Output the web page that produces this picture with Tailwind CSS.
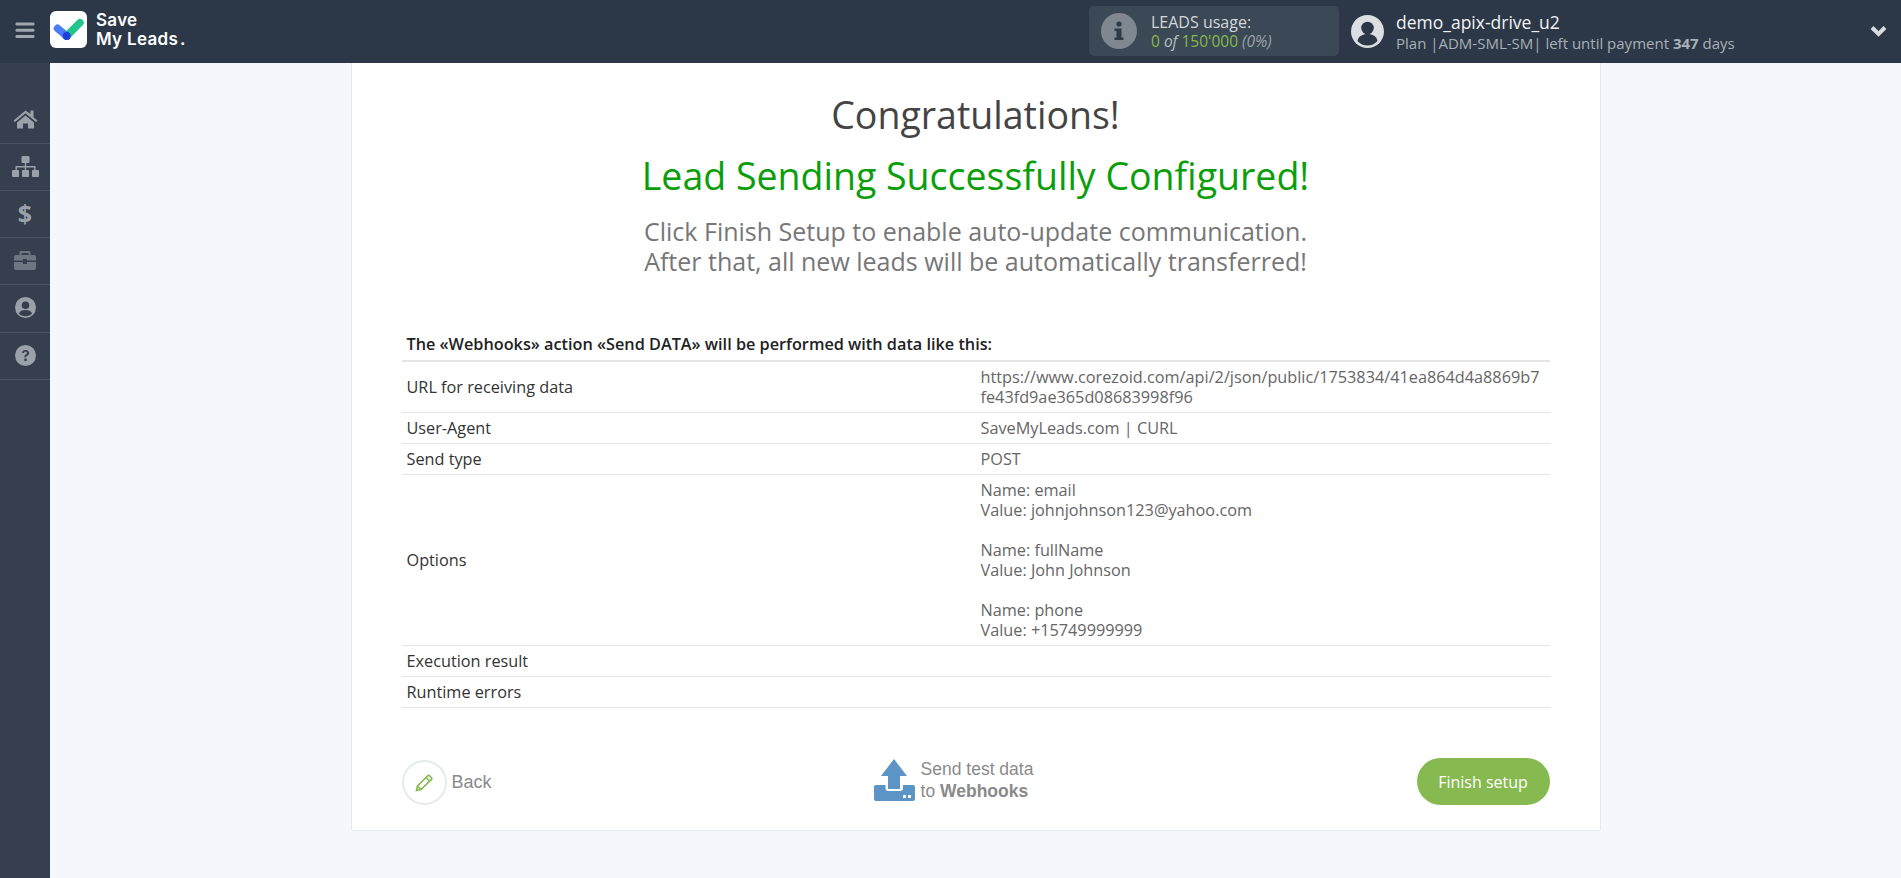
<!DOCTYPE html>
<html><head><meta charset="utf-8"><script src="https://cdn.jsdelivr.net/npm/@tailwindcss/browser@4"></script></head>
<body class="h-[878px] w-[1901px] overflow-hidden bg-[#f4f7fc] font-['Open_Sans',sans-serif]">
<header class="flex h-[63px] items-center bg-[#2c3847]">
  <div class="mb-[3px] flex w-[50px] justify-center">
    <svg width="20" height="17" viewBox="0 0 20 17" fill="#a0a6ad"><rect x="0.500" y="0.500" width="19" height="3" rx="1.2"/><rect x="0.500" y="6.800" width="19" height="3" rx="1.2"/><rect x="0.500" y="13" width="19" height="3" rx="1.2"/></svg>
  </div>
  <div class="mb-[4px] h-[37px] w-[37px] rounded-[6px] bg-white">
    <svg width="37" height="37" viewBox="0 0 37 37" fill="none" stroke-linecap="round"><path d="M16.700 25 L30 11.700" stroke="#22c58b" stroke-width="7.500"/><path d="M7.500 17.300 L16.700 25" stroke="#4a7cf7" stroke-width="7.500"/><circle cx="16.700" cy="25" r="4" fill="#1f3fd6"/></svg>
  </div>
  <div class="mb-[4px] ml-[9px] font-['Inter',sans-serif] text-[17px] leading-[19px] font-semibold tracking-[0.3px] text-white"><div>Save</div><div>My Leads<span class="ml-[2px]">.</span></div></div>
  <div class="mb-[1px] ml-auto flex h-[50px] w-[250px] items-center rounded-[5px] bg-[#3b4855] pl-[12px]">
    <div class="flex h-[36px] w-[36px] items-center justify-center rounded-full bg-[#7f8790]">
      <svg width="12" height="20" viewBox="0 0 12 20" fill="#2f3a47"><circle cx="6" cy="3" r="2.600"/><path d="M1.500 7.500h7v9h2v2.500h-9v-2.500h2v-6.500h-2z"/></svg>
    </div>
    <div class="ml-[14px]">
      <div class="text-[16px] leading-[20px] text-[#d3d7da]">LEADS usage:</div>
      <div class="text-[15.500px] leading-[19px] text-[#85b94e]">0 <i class="text-[#b9bfc4]">of</i> 150'000 <i class="text-[#9aa2a9]">(0%)</i></div>
    </div>
  </div>
  <div class="ml-[12px] flex w-[550px] items-center">
    <svg width="33" height="33" viewBox="0 0 33 33"><circle cx="16.500" cy="16.500" r="16.500" fill="#dcdfe1"/><circle cx="16.500" cy="13" r="6.300" fill="#2c3847"/><path d="M6.500 26c1-5 5-7 10-7s9 2 10 7c-3 3-6 4.500-10 4.500s-7-1.500-10-4.500z" fill="#2c3847"/></svg>
    <div class="ml-[12px]">
      <div class="text-[17.500px] leading-[22px] text-[#f0f2f3]">demo_apix-drive_u2</div>
      <div class="text-[15px] leading-[20px] text-[#a9b0b6]">Plan |ADM-SML-SM| left until payment <b>347</b> days</div>
    </div>
    <svg class="mb-[1px] ml-auto mr-[14px]" width="17" height="12" viewBox="0 0 17 12" fill="none" stroke="#d9dcde" stroke-width="4"><path d="M2 2.500l6.500 6.500 6.500-6.500"/></svg>
  </div>
</header>
<div class="flex h-[815px]">
  <nav class="w-[50px] bg-[#353f4e]">
    <div class="h-[34px]"></div>
    <div class="flex h-[47px] items-center justify-center border-b border-[#475160] pb-[2px]"><svg width="25" height="20" viewBox="0 0 25 20" fill="#9ba1a8"><path d="M12.500 1.500 L0.500 11.500l1.500 1.500 10.500-8.800 10.500 8.800 1.500-1.500-4-3.300V1.500h-3v3.600z"/><path d="M4 13.500l8.500-7 8.500 7v6h-6v-5h-5v5H4z"/></svg></div>
    <div class="flex h-[47px] items-center justify-center border-b border-[#475160] pb-[2px]"><svg width="27" height="21" viewBox="0 0 27 21" fill="#9ba1a8"><rect x="9.500" y="0" width="8" height="7" rx="1"/><rect x="0" y="14" width="7" height="7" rx="1"/><rect x="10" y="14" width="7" height="7" rx="1"/><rect x="20" y="14" width="7" height="7" rx="1"/><path d="M12.800 7h1.400v3h9.300v4h-1.400v-2.600h-7.900V14h-1.400v-2.600H4.900V14H3.500v-4h9.300z"/></svg></div>
    <div class="flex h-[47px] items-center justify-center border-b border-[#475160] pb-[2px]"><span class="text-[25px] leading-none font-bold text-[#9ba1a8]">$</span></div>
    <div class="flex h-[47px] items-center justify-center border-b border-[#475160] pb-[2px]"><svg width="22" height="19" viewBox="0 0 22 19" fill="#6d7681"><path d="M7 0h8a1.500 1.500 0 0 1 1.500 1.500V4H20a2 2 0 0 1 2 2v3.500H13V8H9v1.500H0V6a2 2 0 0 1 2-2h3.500V1.500A1.500 1.500 0 0 1 7 0zm.500 2v2h7V2z"/><path d="M0 11h9v2h4v-2h9v6a2 2 0 0 1-2 2H2a2 2 0 0 1-2-2z"/></svg></div>
    <div class="flex h-[48px] items-center justify-center border-b border-[#475160] pb-[2px]"><svg width="21" height="21" viewBox="0 0 21 21"><circle cx="10.500" cy="10.500" r="10.500" fill="#9ba1a8"/><circle cx="10.500" cy="8.300" r="3.800" fill="#353f4e"/><path d="M3.800 16.500c1-2.500 3.500-3.500 6.700-3.500s5.700 1 6.700 3.500c-1.800 1.800-4 2.700-6.700 2.700s-4.900-.9-6.700-2.700z" fill="#353f4e"/></svg></div>
    <div class="flex h-[47px] items-center justify-center border-b border-[#475160] pb-[2px]"><svg width="21" height="21" viewBox="0 0 21 21"><circle cx="10.500" cy="10.500" r="10.500" fill="#9ba1a8"/><path d="M7 8c.2-2 1.600-3.100 3.600-3.100s3.500 1.200 3.500 3c0 1.500-.9 2.200-1.800 2.800-.8.500-1 .8-1 1.500H9.400c0-1.500.4-2.100 1.400-2.800.8-.5 1.200-.9 1.200-1.500 0-.7-.6-1.200-1.400-1.200-.9 0-1.500.5-1.600 1.300z" fill="#353f4e"/><rect x="9.300" y="13.500" width="2.400" height="2.400" rx=".5" fill="#353f4e"/></svg></div>
  </nav>
  <main class="flex-1">
    <section class="mx-auto h-[768px] w-[1250px] rounded-b-[2px] border border-t-0 border-[#e7e9ec] bg-white px-[50px]">
      <h1 class="pt-[29px] text-center text-[37.500px] leading-[46px] text-[#444]">Congratulations!</h1>
      <h2 class="mt-[15px] text-center text-[37.500px] leading-[46px] text-[#0a9e0a]">Lead Sending Successfully Configured!</h2>
      <p class="mt-[17px] text-center text-[25px] leading-[30px] text-[#777]">Click Finish Setup to enable auto-update communication.<br>After that, all new leads will be automatically transferred!</p>
      <div class="mt-[58px]">
        <div class="border-b-2 border-[#e3e5e6] px-[5px] pb-[5px] text-[16.250px] leading-[21px] font-semibold text-[#222]">The «Webhooks» action «Send DATA» will be performed with data like this:</div>
        <div class="flex h-[51px] items-center border-b border-[#e3e5e6] text-[16.250px] leading-[20px]"><div class="w-[579px] px-[5px] text-[#333]">URL for receiving data</div><div class="whitespace-nowrap text-[#666]">https://www.corezoid.com/api/2/json/public/1753834/41ea864d4a8869b7<br>fe43fd9ae365d08683998f96</div></div>
        <div class="flex h-[31px] items-center border-b border-[#e3e5e6] text-[16.250px] leading-[20px]"><div class="w-[579px] px-[5px] text-[#333]">User-Agent</div><div class="text-[#666]">SaveMyLeads.com | CURL</div></div>
        <div class="flex h-[31px] items-center border-b border-[#e3e5e6] text-[16.250px] leading-[20px]"><div class="w-[579px] px-[5px] text-[#333]">Send type</div><div class="text-[#666]">POST</div></div>
        <div class="flex h-[171px] items-center border-b border-[#e3e5e6] text-[16.250px] leading-[20px]"><div class="w-[579px] px-[5px] text-[#333]">Options</div><div class="text-[#666]">Name: email<br>Value: johnjohnson123@yahoo.com<br><br>Name: fullName<br>Value: John Johnson<br><br>Name: phone<br>Value: +15749999999</div></div>
        <div class="flex h-[31px] items-center border-b border-[#e3e5e6] text-[16.250px] leading-[20px] text-[#333]"><div class="px-[5px]">Execution result</div></div>
        <div class="flex h-[31px] items-center border-b border-[#e3e5e6] text-[16.250px] leading-[20px] text-[#333]"><div class="px-[5px]">Runtime errors</div></div>
      </div>
      <div class="mt-[50px] flex items-center justify-between">
        <div class="flex w-[256px] items-center">
          <div class="flex h-[45px] w-[45px] items-center justify-center rounded-full border-2 border-[#e4ecea]"><svg width="20" height="20" viewBox="0 0 20 20" fill="none" stroke="#85b94e" stroke-width="1.600"><path d="M2.500 17.500l1-4.500L13.800 2.700a1.200 1.200 0 0 1 1.700 0l2 2a1.200 1.200 0 0 1 0 1.700L7 16.500z"/><path d="M3.500 13l3.500 3.500M12 4.500l3.500 3.500"/></svg></div>
          <span class="ml-[5px] font-['Liberation_Sans',sans-serif] text-[18px] text-[#8a8a8a]">Back</span>
        </div>
        <div class="mb-[5px] flex items-center">
          <svg width="41" height="42" viewBox="0 0 41 42" fill="#5c94c6"><path d="M20 0 L33 17H26V30H14V17H7z"/><path d="M0 28a2 2 0 0 1 2-2H11.500v3a3 3 0 0 0 3 3H26a3 3 0 0 0 3-3v-3h10a2 2 0 0 1 2 2v12a2 2 0 0 1-2 2H2a2 2 0 0 1-2-2z"/><rect x="29" y="36" width="3" height="3" fill="#fff"/><rect x="34" y="36" width="3" height="3" fill="#fff"/></svg>
          <div class="ml-[6px] font-['Liberation_Sans',sans-serif] text-[17.500px] leading-[22px] text-[#8a8a8a]"><div>Send test data</div><div>to <b>Webhooks</b></div></div>
        </div>
        <div class="flex w-[300px] justify-end"><button class="mb-[2px] h-[47px] w-[133px] rounded-full bg-[#87b951] text-[16px] text-white">Finish setup</button></div>
      </div>
    </section>
  </main>
</div>
</body></html>
